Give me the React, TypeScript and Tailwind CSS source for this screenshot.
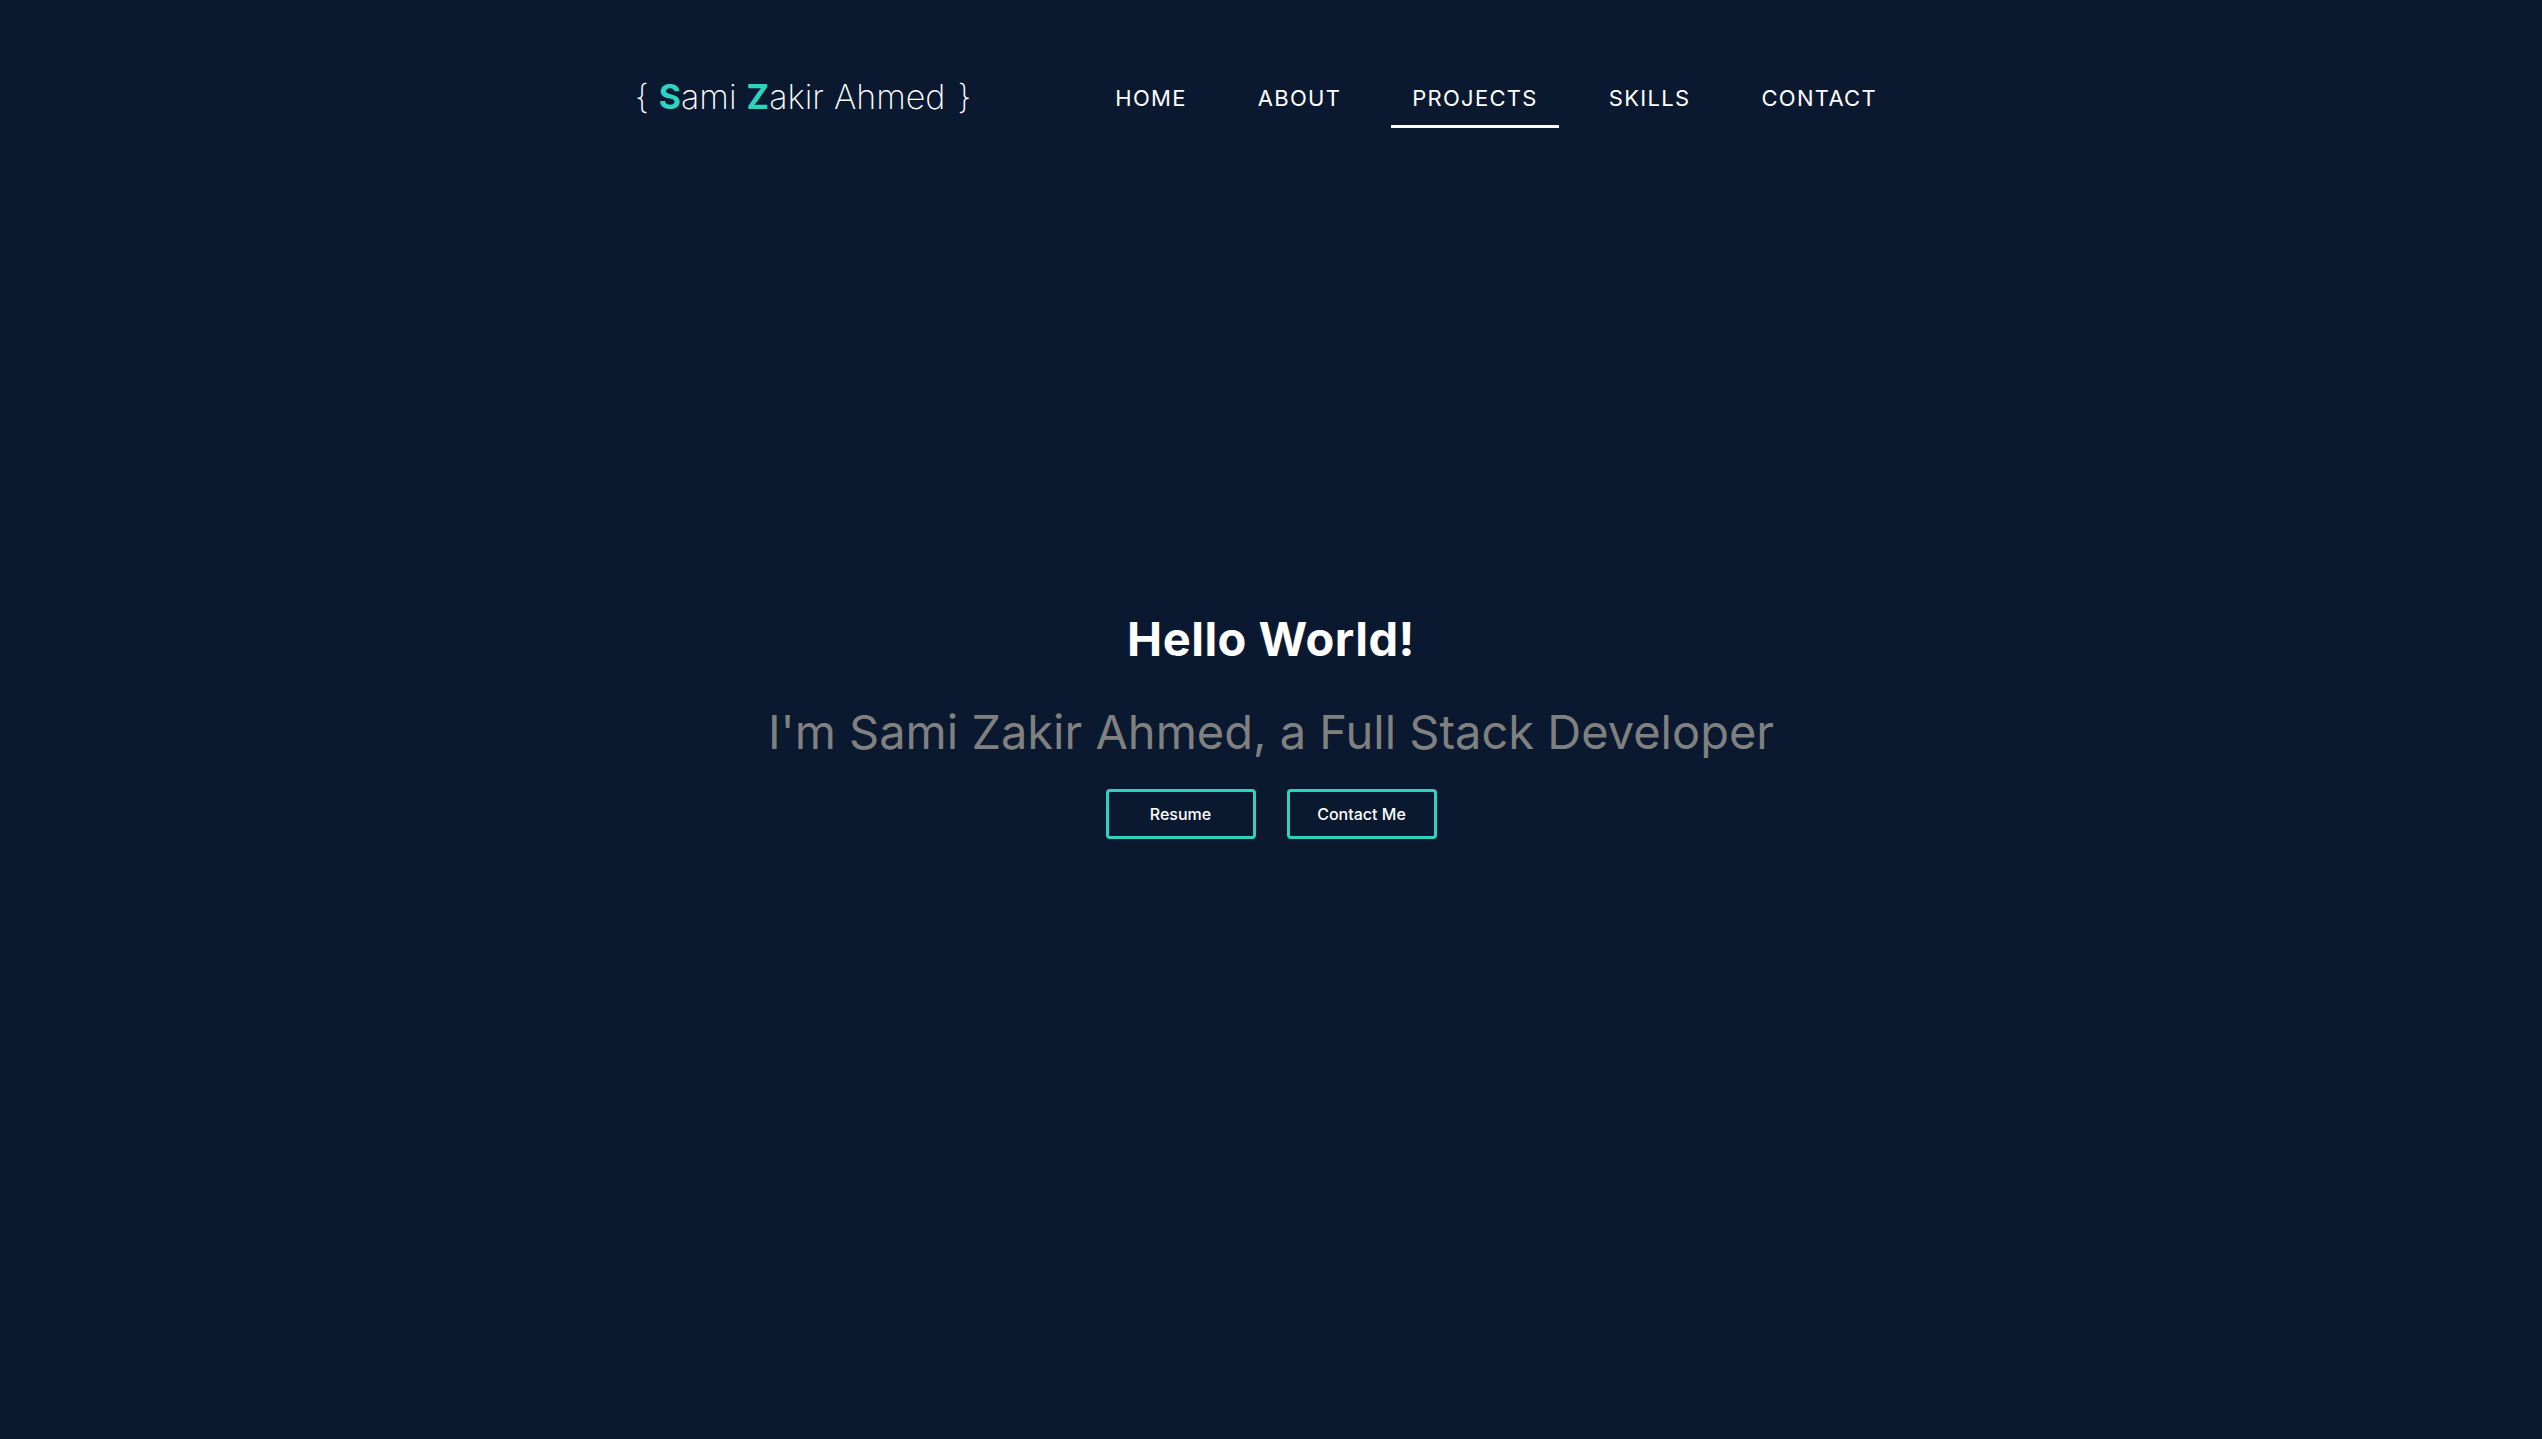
import React from "react";

const font = { fontFamily: "Inter, 'Noto Sans', sans-serif" };

export default function App() {
  const items = ["HOME", "ABOUT", "PROJECTS", "SKILLS", "CONTACT"];
  return (
    <div className="min-h-screen w-full bg-[#0a192f] text-white" style={font}>
      <header className="mx-auto flex w-[1272px] items-start justify-between pt-[80px]">
        <div className="flex items-center text-[34px] font-extralight leading-none tracking-[0px] text-white">
          <span>{"{"}</span>
          <span className="ml-[10px] font-bold text-[#2ed3bf]">S</span>
          <span>ami</span>
          <span className="ml-[10px] font-bold text-[#2ed3bf]">Z</span>
          <span>akir</span>
          <span className="ml-[10px]">Ahmed</span>
          <span className="ml-[12px]">{"}"}</span>
        </div>
        <nav className="mr-[9px] flex items-start gap-[29px] pt-[7px]">
          {items.map((it) => (
            <a
              key={it}
              className={
                "block px-[21px] pb-[16px] text-[22px] font-normal leading-none tracking-[1.3px] " +
                (it === "PROJECTS" ? "border-b-[3px] border-white" : "border-b-[3px] border-transparent")
              }
            >
              {it}
            </a>
          ))}
        </nav>
      </header>
      <main className="flex flex-col items-center pt-[487px]">
        <h1 className="text-[47px] font-bold leading-none tracking-[0.5px]">Hello World!</h1>
        <p className="mt-[46px] text-[47px] font-normal leading-none text-[#808080]">
          I'm Sami Zakir Ahmed, a Full Stack Developer
        </p>
        <div className="mt-[34px] flex gap-[31px]">
          <button className="h-[50px] w-[150px] rounded-[4px] border-[3px] border-[#2ed3bf] text-[16px] font-medium text-white">
            Resume
          </button>
          <button className="h-[50px] w-[150px] rounded-[4px] border-[3px] border-[#2ed3bf] text-[16px] font-medium text-white">
            Contact Me
          </button>
        </div>
      </main>
    </div>
  );
}
